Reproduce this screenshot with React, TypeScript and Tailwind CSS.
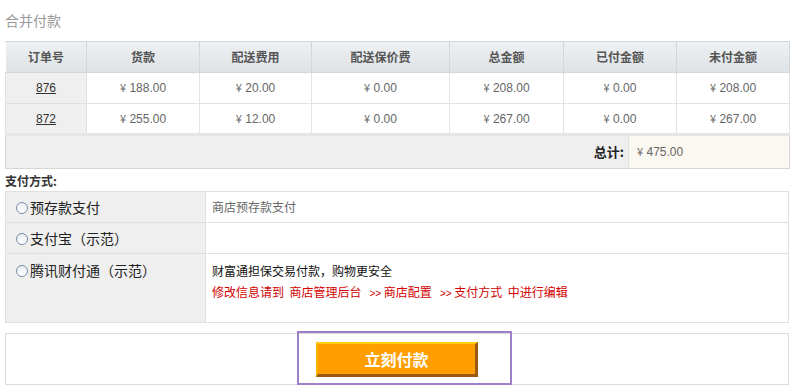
import React from "react";

const orders = [
  { id: "876", goods: "188.00", ship: "20.00", insure: "0.00", total: "208.00", paid: "0.00", unpaid: "208.00" },
  { id: "872", goods: "255.00", ship: "12.00", insure: "0.00", total: "267.00", paid: "0.00", unpaid: "267.00" },
];

const heads = ["订单号", "货款", "配送费用", "配送保价费", "总金额", "已付金额", "未付金额"];
const widths = ["w-[81px]", "w-[113px]", "w-[112px]", "w-[138px]", "w-[114px]", "w-[113px]", "w-[113px]"];

const Money = ({ v }: { v: string }) => (
  <span>
    <span className="font-['Noto_Sans_CJK_SC'] text-[11px]">¥</span> {v}
  </span>
);

const Radio = () => (
  <span className="inline-block w-[12px] h-[12px] rounded-full border border-[#7a8ea8] bg-gradient-to-b from-[#e9eef4] to-white mr-[2px] align-[-1px]" />
);

export default function App() {
  return (
    <div className="w-[801px] h-[392px] bg-white px-[5px] font-['Liberation_Sans','Noto_Sans_CJK_SC',sans-serif] text-[12px] text-[#666]">
      <div className="pt-[11px] h-[41px] text-[14px] text-[#999] font-['Noto_Sans_CJK_SC',sans-serif] leading-[18px]">合并付款</div>

      <table className="w-[784px] border-collapse table-fixed border border-[#d6d6d6]">
        <thead>
          <tr className="h-[31px] bg-gradient-to-b from-[#eef1f3] to-[#dde2e6]">
            {heads.map((h, i) => (
              <th
                key={h}
                className={`${widths[i]} border border-[#d6d6d6] border-l-white font-bold text-[#555] font-['Noto_Sans_CJK_SC',sans-serif] text-[12px]`}
              >
                {h}
              </th>
            ))}
          </tr>
        </thead>
        <tbody>
          {orders.map((o) => (
            <tr key={o.id} className="h-[31px] text-center">
              <td className="bg-[#efefef] border border-[#e0e0e0]">
                <a className="underline text-[#333]">{o.id}</a>
              </td>
              <td className="border border-[#e3e3e3]"><Money v={o.goods} /></td>
              <td className="border border-[#e3e3e3]"><Money v={o.ship} /></td>
              <td className="border border-[#e3e3e3]"><Money v={o.insure} /></td>
              <td className="border border-[#e3e3e3]"><Money v={o.total} /></td>
              <td className="border border-[#e3e3e3]"><Money v={o.paid} /></td>
              <td className="border border-[#e3e3e3]"><Money v={o.unpaid} /></td>
            </tr>
          ))}
          <tr className="border-t-[3px] border-[#e6e6e6]">
            <td colSpan={7} className="p-0">
              <div className="flex h-[32px]">
                <div className="w-[623px] bg-[#efefef] flex items-center justify-end pr-[4px] border-r border-[#e0e0e0]">
                  <span className="font-bold text-[13px] text-[#222] font-['Noto_Sans_CJK_SC',sans-serif]">总计:</span>
                </div>
                <div className="flex-1 bg-[#fbf8f1] flex items-center pl-[8px]">
                  <Money v="475.00" />
                </div>
              </div>
            </td>
          </tr>
        </tbody>
      </table>

      <div className="h-[22px] pt-[5px] font-bold text-[#333] text-[12px] font-['Noto_Sans_CJK_SC',sans-serif] leading-[14px]">支付方式:</div>

      <table className="w-[784px] border-collapse table-fixed border border-[#d6d6d6] font-['Noto_Sans_CJK_SC',sans-serif]">
        <tbody>
          <tr className="h-[31px]">
            <td className="w-[200px] bg-[#efefef] border border-[#e0e0e0] pl-[10px] text-[14px] text-[#222]">
              <Radio />预存款支付
            </td>
            <td className="border border-[#e0e0e0] pl-[6px] text-[12px] text-[#666]">商店预存款支付</td>
          </tr>
          <tr className="h-[31px]">
            <td className="bg-[#efefef] border border-[#e0e0e0] pl-[10px] text-[14px] text-[#222]">
              <Radio />支付宝（示范）
            </td>
            <td className="border border-[#e0e0e0]"></td>
          </tr>
          <tr className="h-[69px]">
            <td className="bg-[#efefef] border border-[#e0e0e0] pl-[10px] pt-[6px] align-top text-[14px] text-[#222]">
              <Radio />腾讯财付通（示范）
            </td>
            <td className="border border-[#e0e0e0] pl-[6px] pt-[6px] align-top text-[12px] leading-[21px]">
              <div className="text-[#111]">财富通担保交易付款，购物更安全</div>
              <div className="text-[#d40000] whitespace-pre">
                修改信息请到  商店管理后台   <span className="font-['Liberation_Sans'] text-[10px]">&gt;&gt;</span> 商店配置   <span className="font-['Liberation_Sans'] text-[10px]">&gt;&gt;</span> 支付方式  中进行编辑
              </div>
            </td>
          </tr>
        </tbody>
      </table>

      <div className="mt-[10px] w-[784px] h-[52px] border border-[#dcdcdc] flex items-center justify-center">
        <div className="relative">
          <button className="w-[162px] h-[35px] bg-[#ff9e00] border-t-[2px] border-l-[2px] border-t-[#ffcc11] border-l-[#ffb300] border-b-[3px] border-r-[3px] border-b-[#9c5a10] border-r-[#9c5a10] text-white font-bold text-[16px] font-['Noto_Sans_CJK_SC',sans-serif]">
            立刻付款
          </button>
          <div className="absolute left-[-19px] top-[-11px] w-[215px] h-[54px] border-2 border-[#9d80c8] pointer-events-none" />
        </div>
      </div>
    </div>
  );
}
